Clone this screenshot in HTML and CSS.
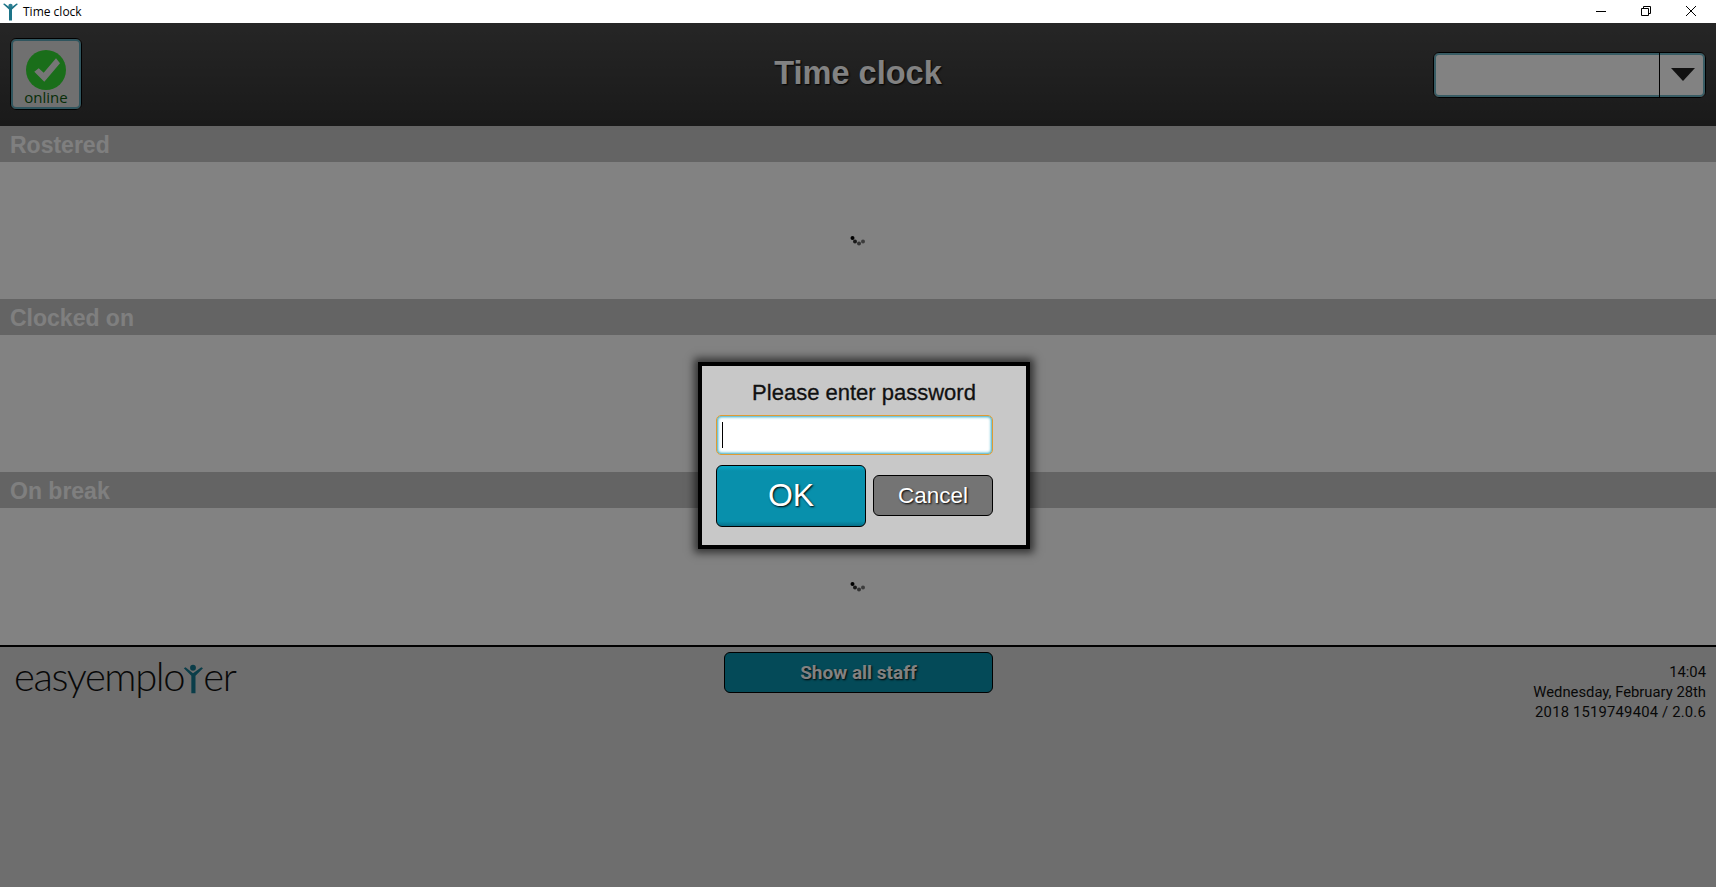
FILE: index.html
```html
<!DOCTYPE html>
<html lang="en">
<head>
    <meta charset="UTF-8">
    <meta name="viewport" content="width=device-width, initial-scale=1.0">
    <title>Time clock</title>
    <link rel="stylesheet" href="styles.css">
</head>
<body>
    <!-- Window title bar -->
    <div class="titlebar">
        <svg class="app-icon" width="16" height="20" viewBox="0 0 16 20">
            <circle cx="8.5" cy="4" r="2.2" fill="#2d7f93"/>
            <path d="M1 2 L7 7.5 L7 18.5 L10 18.5 L10 7.5 L16 2 L14.5 1.5 L8.5 6 L2.5 1.5 Z" fill="#1d7488"/>
        </svg>
        <span class="window-title">Time clock</span>
        <div class="window-buttons">
            <svg width="12" height="12" viewBox="0 0 12 12"><path d="M1 6.5 H11" stroke="#000" fill="none"/></svg>
            <svg width="12" height="12" viewBox="0 0 12 12"><path d="M1.5 3.5 H8.5 V10.5 H1.5 Z M3.5 3.5 V1.5 H10.5 V8.5 H8.5" stroke="#000" fill="none"/></svg>
            <svg width="12" height="12" viewBox="0 0 12 12"><path d="M1 1 L11 11 M11 1 L1 11" stroke="#000" fill="none"/></svg>
        </div>
    </div>

    <div class="app">
        <header class="topbar">
            <div class="status-btn">
                <svg width="40" height="40" viewBox="0 0 40 40">
                    <circle cx="20" cy="20" r="20" fill="#34d834"/>
                    <path d="M8.3 21.7 L12.7 18.3 L17.7 22.7 L30 8.3 L34 13.3 L18.3 31.7 Z" fill="#e8e8e8"/>
                </svg>
                <span class="status-label">online</span>
            </div>
            <h1>Time clock</h1>
            <div class="site-select">
                <div class="site-value"></div>
                <div class="site-arrow"><span class="triangle"></span></div>
            </div>
        </header>

        <h2 class="section-head">Rostered</h2>
        <section class="section-body">
            <svg class="spinner" width="16" height="10" viewBox="0 0 16 10">
                <circle cx="2.5" cy="2" r="2" fill="#000"/>
                <circle cx="5" cy="5.5" r="2" fill="#333"/>
                <circle cx="9" cy="7.5" r="2" fill="#666"/>
                <circle cx="13" cy="5.5" r="2" fill="#777"/>
            </svg>
        </section>

        <h2 class="section-head">Clocked on</h2>
        <section class="section-body"></section>

        <h2 class="section-head">On break</h2>
        <section class="section-body">
            <svg class="spinner" width="16" height="10" viewBox="0 0 16 10">
                <circle cx="2.5" cy="2" r="2" fill="#000"/>
                <circle cx="5" cy="5.5" r="2" fill="#333"/>
                <circle cx="9" cy="7.5" r="2" fill="#666"/>
                <circle cx="13" cy="5.5" r="2" fill="#777"/>
            </svg>
        </section>

        <footer class="footer">
            <div class="logo">easyemplo<svg class="logo-y" width="20" height="32" viewBox="0 0 24 36">
                    <circle cx="12" cy="4.5" r="3.5" fill="#15788f"/>
                    <path d="M1 5 L10 14 L10 35 L15 35 L15 14 L24 5 L22 4 L12 11 L3 4 Z" fill="#15788f"/>
                </svg>er</div>
            <button class="show-all">Show all staff</button>
            <div class="clock-info">14:04<br>Wednesday, February 28th<br><span class="build-line">2018 1519749404 / 2.0.6</span></div>
        </footer>

        <!-- Password prompt over the dimmed page -->
        <div class="overlay">
            <div class="dialog">
                <p class="dialog-title">Please enter password</p>
                <div class="password-box"><span class="caret"></span></div>
                <div class="dialog-buttons">
                    <button class="btn-ok">OK</button>
                    <button class="btn-cancel">Cancel</button>
                </div>
            </div>
        </div>
    </div>
</body>
</html>
```

FILE: styles.css
```css
body {
    font-family: "Liberation Sans", Arial, sans-serif;
    margin: 0;
    padding: 0;
    height: 887px;
    overflow: hidden;
    background-color: #fff;
}
.titlebar {
    height: 23px;
    display: flex;
    align-items: center;
    background-color: #fff;
}
.app-icon {
    margin-left: 2px;
}
.window-title {
    font-family: "Open Sans", sans-serif;
    font-size: 12px;
    margin-left: 5px;
    color: #000;
}
.window-buttons {
    margin-left: auto;
    margin-right: 19px;
    margin-bottom: 2px;
    display: flex;
    gap: 33px;
}
.app {
    position: relative;
    height: 864px;
    display: flex;
    flex-direction: column;
    background-color: #d8d8d8;
}
.topbar {
    height: 103px;
    display: grid;
    grid-template-columns: 1fr auto 1fr;
    align-items: center;
    background: linear-gradient(#4b4b4b, #333);
    padding: 0 10px;
}
.status-btn {
    width: 72px;
    height: 72px;
    box-sizing: border-box;
    margin-top: -2px;
    border: 1px solid #000;
    border-radius: 6px;
    box-shadow: inset 0 0 0 2px #5fa8b8;
    background-color: #dcdcdc;
    display: flex;
    flex-direction: column;
    align-items: center;
    padding-top: 11px;
}
.status-label {
    font-family: "Open Sans", sans-serif;
    font-size: 15px;
    line-height: 16px;
    margin-top: -1px;
    color: #0e5a0e;
}
.topbar h1 {
    margin: -2px 0 0;
    text-align: center;
    font-size: 32.5px;
    color: #fff;
    text-shadow: 1px 1px 2px #000;
}
.site-select {
    justify-self: end;
    width: 273px;
    height: 46px;
    box-sizing: border-box;
    display: flex;
    border: 1px solid #000;
    border-radius: 6px;
    box-shadow: inset 0 0 0 2px #6fb4c4;
    background-color: #fff;
}
.site-value {
    flex: 1;
    border-right: 1px solid #000;
}
.site-arrow {
    width: 45px;
    display: flex;
    align-items: center;
    justify-content: center;
}
.triangle {
    width: 0;
    height: 0;
    border-left: 12px solid transparent;
    border-right: 12px solid transparent;
    border-top: 13px solid #222;
}
.section-head {
    height: 36px;
    line-height: 38px;
    margin: 0;
    padding-left: 10px;
    font-size: 23px;
    font-weight: bold;
    color: #fafafa;
    background-color: #c4c4c4;
}
.section-body {
    height: 137px;
    display: flex;
    justify-content: center;
    align-items: center;
    background-color: #fff;
}
.spinner {
    margin-top: 20px;
}
.footer {
    flex: 1;
    border-top: 2px solid #000;
    display: flex;
    align-items: flex-start;
    position: relative;
    background-color: #d8d8d8;
}
.logo {
    font-family: "Lato", sans-serif;
    font-weight: 300;
    font-size: 40px;
    line-height: 44px;
    letter-spacing: -1.4px;
    margin: 7px 0 0 14px;
    color: #111;
    display: flex;
    align-items: flex-start;
}
.logo-y {
    margin: 9px 0 0 -1px;
}
.show-all {
    position: absolute;
    left: 724px;
    top: 5px;
    width: 269px;
    height: 41px;
    border: 1px solid #000;
    border-radius: 6px;
    background-color: #0892ad;
    color: #fff;
    font-family: "Roboto", sans-serif;
    font-size: 19px;
    font-weight: bold;
    text-shadow: 1px 1px 2px #000;
}
.clock-info {
    margin-left: auto;
    margin-right: 10px;
    margin-top: 15px;
    width: 200px;
    text-align: right;
    font-family: "Roboto", sans-serif;
    font-size: 14.8px;
    line-height: 20px;
    color: #111;
}
.build-line {
    letter-spacing: 0.2px;
}
.overlay {
    position: absolute;
    inset: 0;
    background-color: rgba(0, 0, 0, 0.49);
    display: flex;
    justify-content: center;
    align-items: center;
    padding-left: 12px;
    box-sizing: border-box;
}
.dialog {
    width: 332px;
    height: 187px;
    box-sizing: border-box;
    padding: 14px 0 0 14px;
    border: 4px solid #000;
    background-color: #c8c8c8;
    box-shadow: 0 0 8px 4px rgba(0, 0, 0, 0.6);
}
.dialog-title {
    margin: 0 0 9px;
    width: 296px;
    text-align: center;
    font-size: 22px;
    line-height: 26px;
    color: #111;
    -webkit-text-stroke: 0.3px #111;
}
.password-box {
    width: 277px;
    height: 40px;
    box-sizing: border-box;
    display: flex;
    align-items: center;
    padding-left: 5px;
    border: 1px solid #e09b32;
    border-radius: 5px;
    box-shadow: inset 0 0 3px 1px #2aa5c0;
    background-color: #fff;
}
.caret {
    width: 1px;
    height: 26px;
    background-color: #000;
}
.dialog-buttons {
    margin-top: 10px;
    width: 277px;
    display: flex;
    align-items: center;
    justify-content: space-between;
}
.btn-ok {
    width: 150px;
    height: 62px;
    border: 1px solid #000;
    border-radius: 6px;
    background: linear-gradient(#05a8c8 0, #0890ac 8%, #0890ac 92%, #06708a 100%);
    color: #fff;
    font-family: "Liberation Sans", sans-serif;
    font-size: 32px;
    text-shadow: 1px 1px 2px #000;
}
.btn-cancel {
    width: 120px;
    height: 41px;
    border: 1px solid #000;
    border-radius: 6px;
    background-color: #747474;
    color: #fff;
    font-family: "Liberation Sans", sans-serif;
    font-size: 22.5px;
    text-shadow: 1px 1px 2px #000;
}
```
